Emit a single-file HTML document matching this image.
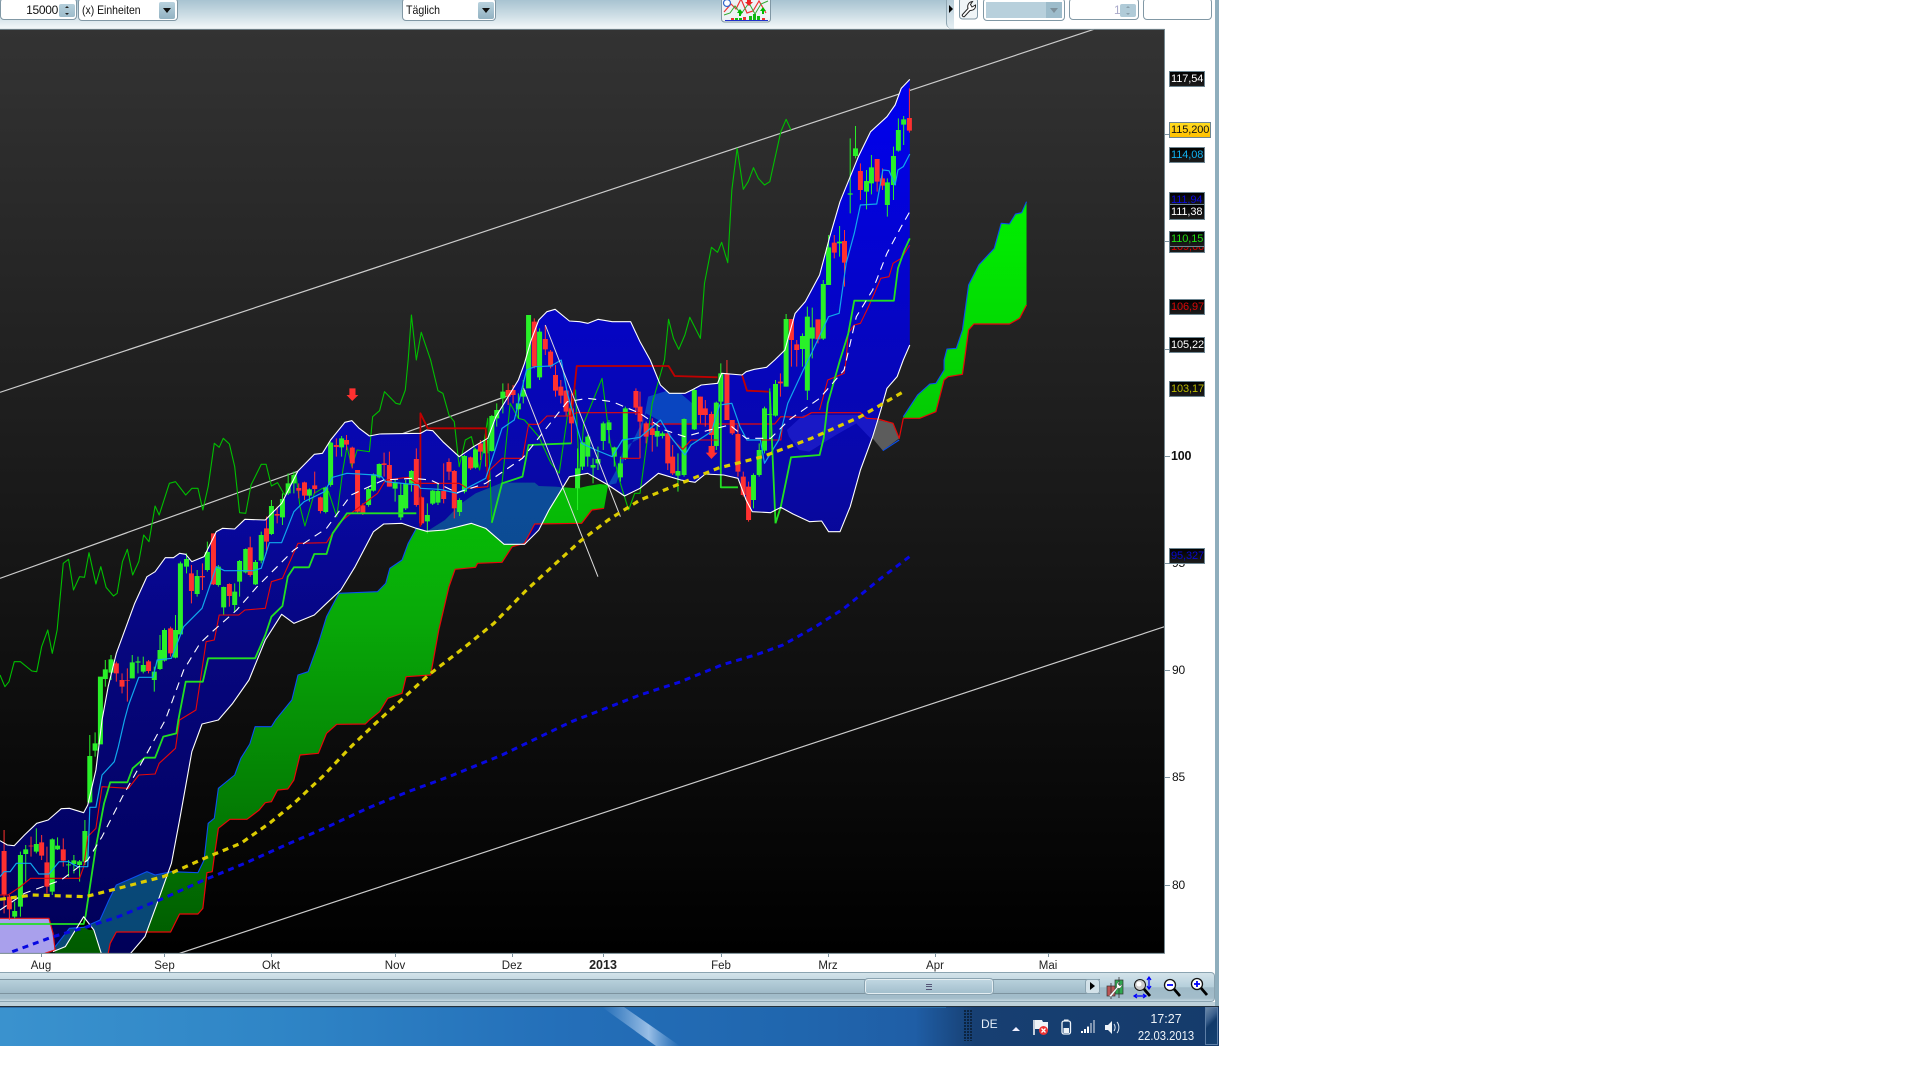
<!DOCTYPE html>
<html><head><meta charset="utf-8"><title>Chart</title>
<style>
html,body{margin:0;padding:0;background:#fff;width:1920px;height:1080px;overflow:hidden;font-family:"Liberation Sans",sans-serif}
.a{position:absolute}
svg{display:block}
.c path,.c polyline{vector-effect:non-scaling-stroke;fill:none;stroke-linejoin:round}
.box{position:absolute;background:#fff;border:1px solid #8198a5;border-radius:4px;box-sizing:border-box}
.t{position:absolute;font-size:12px;line-height:14px;color:#111;white-space:nowrap}
.dd{position:absolute;background:linear-gradient(#b9d2de,#92b2c2);border-radius:2px}
.dd:after{content:"";position:absolute;left:4px;top:6px;border-left:4px solid transparent;border-right:4px solid transparent;border-top:5px solid #111}
.l{position:absolute;left:1169px;width:36px;height:16px;box-sizing:border-box;border:1px solid #6e8692;background:linear-gradient(#000,#1c1c1c);font-size:11px;line-height:15px;letter-spacing:-.1px;padding-left:1px;white-space:nowrap;overflow:hidden}
.y{position:absolute;left:1172px;font-size:12px;line-height:14px;color:#111;letter-spacing:-.2px}
.k{position:absolute;left:1165px;width:5px;height:1px;background:#7d939f}
.x{position:absolute;top:959px;font-size:11.5px;line-height:14px;color:#222;transform:translateX(-50%)}
.tk{position:absolute;top:953px;width:1px;height:4px;background:#7d939f}
</style></head><body>

<!-- top toolbar -->
<div class="a" style="left:0;top:0;width:947px;height:29px;background:linear-gradient(#a8c3d1,#cfdfe6 55%,#f5f9fa)"></div>
<div class="a" style="left:946px;top:0;width:8px;height:29px;background:linear-gradient(#b6ccd8,#e6eff3);border-left:1px solid #8fa6b2;border-bottom-left-radius:6px;box-sizing:border-box"></div>
<div class="a" style="left:949px;top:5px;border-top:4px solid transparent;border-bottom:4px solid transparent;border-left:4px solid #000"></div>

<div class="box" style="left:0;top:-2px;width:77px;height:22px"></div>
<div class="t" style="right:1862px;top:3px;letter-spacing:-.3px">15000</div>
<div class="a" style="left:59px;top:4px;width:16px;height:13px;background:linear-gradient(#b5cfdb,#9dbccb);border-radius:2px"></div>
<div class="a" style="left:65px;top:6px;border-left:2px solid transparent;border-right:2px solid transparent;border-bottom:2px solid #222"></div>
<div class="a" style="left:65px;top:13px;border-left:2px solid transparent;border-right:2px solid transparent;border-top:2px solid #222"></div>

<div class="box" style="left:78px;top:-2px;width:100px;height:23px"></div>
<div class="t" style="left:82px;top:3px;transform:scaleX(.87);transform-origin:left">(x) Einheiten</div>
<div class="dd" style="left:159px;top:2px;width:16px;height:17px"></div>

<div class="box" style="left:402px;top:-2px;width:94px;height:23px"></div>
<div class="t" style="left:406px;top:3px;transform:scaleX(.88);transform-origin:left">Täglich</div>
<div class="dd" style="left:478px;top:2px;width:16px;height:17px"></div>

<svg class="a" style="left:721px;top:0" width="50" height="23" viewBox="0 0 50 23">
<rect x=".5" y="-3" width="49" height="25" rx="3" fill="#eef3f5" stroke="#8198a5"/>
<polyline points="3,12 10,4 15,9 20,-1 26,13 32,11 38,1 45,13" fill="none" stroke="#e33" stroke-width="1.2"/>
<polyline points="3,15 9,13 14,6 20,14 28,3 34,14 40,4 47,1" fill="none" stroke="#3a3" stroke-width="1"/>
<circle cx="6" cy="3" r="3.5" fill="#fff" stroke="#36c" stroke-width="1.2"/>
<path d="M16 13l3-4 3 4h-2v3h-2v-3zM39 11l3-4 3 4h-2v3h-2v-3z" fill="#0b0"/>
<path d="M26 -1h4v3h2l-4 4-4-4h2z" fill="#e22"/>
<path d="M14 18h3v2h-3zM18 18h3v2h-3zM28 16h3v4h-3zM32 14h3v6h-3zM36 16h3v4h-3z" fill="#1b1"/>
<path d="M10 18h3v2h-3zM22 17h3v3h-3zM41 18h3v2h-3z" fill="#e33"/>
<path d="M4 20.5h43" stroke="#23c" stroke-width="1"/>
</svg>

<svg class="a" style="left:959px;top:0" width="20" height="20" viewBox="0 0 20 20">
<rect x=".5" y="-2" width="18" height="21" rx="3" fill="#f0f5f7" stroke="#8198a5"/>
<path d="M3.500 14.500L9 8.500C8 5.500 9.500 2 13.500 1.500L11.500 4.500 13 7 16.500 5C17 8.500 14.500 10.500 11 10.500L5.500 16.500C4.500 17.500 2.500 15.500 3.500 14.500Z" fill="#fff" stroke="#222" stroke-width="1"/>
</svg>

<div class="box" style="left:983px;top:-2px;width:82px;height:23px"></div>
<div class="a" style="left:986px;top:2px;width:60px;height:16px;background:#b8d0dc"></div>
<div class="a" style="left:1046px;top:2px;width:16px;height:16px;background:#9dbccb"></div>
<div class="a" style="left:1050px;top:8px;border-left:4px solid transparent;border-right:4px solid transparent;border-top:5px solid #7d909b"></div>
<div class="box" style="left:1069px;top:-2px;width:70px;height:22px"></div>
<div class="t" style="left:1114px;top:3px;color:#a9a9c9">1</div>
<div class="a" style="left:1120px;top:4px;width:16px;height:13px;background:#b0cbd8;border-radius:2px"></div>
<div class="a" style="left:1126px;top:6px;border-left:2px solid transparent;border-right:2px solid transparent;border-bottom:2px solid #8aa0ac"></div>
<div class="a" style="left:1126px;top:13px;border-left:2px solid transparent;border-right:2px solid transparent;border-top:2px solid #8aa0ac"></div>
<div class="box" style="left:1143px;top:-2px;width:69px;height:22px"></div>

<!-- chart svg -->
<svg class="a c" style="left:0;top:0" width="1920" height="1080" viewBox="0 0 4704 3240" preserveAspectRatio="none">
<defs>
<linearGradient id="bg" gradientUnits="userSpaceOnUse" x1="0" y1="88" x2="0" y2="2860"><stop offset="0" stop-color="#333"/><stop offset="1" stop-color="#000"/></linearGradient>
<linearGradient id="bl" gradientUnits="userSpaceOnUse" x1="0" y1="240" x2="0" y2="2860"><stop offset="0" stop-color="#0000f0"/><stop offset=".45" stop-color="#0808a8"/><stop offset=".65" stop-color="#06067e"/><stop offset="1" stop-color="#000058"/></linearGradient>
<linearGradient id="gr" gradientUnits="userSpaceOnUse" x1="0" y1="600" x2="0" y2="2860"><stop offset="0" stop-color="#00f000"/><stop offset=".55" stop-color="#08aa08"/><stop offset="1" stop-color="#005a00"/></linearGradient>
<clipPath id="ch"><rect x="0" y="89" width="2853" height="2770"/></clipPath>
<clipPath id="bd"><path d="M0,2522 18,2535 35,2537 60,2505 90,2470 118,2460 150,2426 170,2425 205,2438 215,2415 235,2310 250,2160 265,2060 285,1960 300,1910 330,1810 360,1730 380,1715 405,1673 425,1673 440,1660 455,1663 470,1685 500,1670 530,1595 545,1585 575,1587 600,1558 650,1560 690,1510 730,1413 770,1363 790,1360 810,1320 845,1267 862,1262 880,1285 905,1308 930,1302 1030,1300 1045,1290 1060,1292 1085,1325 1125,1370 1160,1340 1195,1315 1215,1250 1270,1140 1285,1090 1300,1025 1320,960 1340,935 1360,928 1395,963 1420,965 1440,970 1465,958 1500,965 1545,965 1568,1025 1593,1080 1618,1155 1640,1180 1678,1180 1698,1168 1718,1155 1758,1150 1768,1120 1818,1125 1828,1115 1848,1108 1878,1102 1898,1080 1923,1050 1948,940 1973,905 2008,825 2033,710 2058,605 2083,530 2103,470 2133,395 2173,350 2193,315 2208,265 2229,238 2229,1035 2213,1080 2198,1130 2173,1165 2158,1230 2138,1310 2108,1410 2083,1520 2058,1595 2030,1595 2013,1563 1983,1565 1943,1542 1913,1522 1888,1538 1843,1535 1828,1500 1808,1435 1773,1425 1728,1422 1703,1447 1668,1440 1613,1420 1568,1465 1530,1488 1490,1455 1440,1420 1395,1430 1345,1530 1320,1590 1285,1633 1235,1633 1190,1585 1155,1570 1090,1590 1045,1594 1020,1585 985,1570 940,1572 915,1595 870,1700 835,1770 800,1810 770,1845 720,1870 690,1843 650,1920 610,2040 570,2110 535,2160 495,2172 470,2255 440,2460 420,2590 385,2710 355,2810 320,2860 248,2860 230,2790 205,2750 160,2840 130,2855 0,2860Z"/></clipPath>
</defs>
<rect x="0" y="88" width="2853" height="2772" fill="url(#bg)"/>
<g clip-path="url(#ch)">
<path d="M0,1177 2680,88" stroke="#ccc" stroke-width="1.2"/>
<path d="M0,1735 1465,1090" stroke="#ccc" stroke-width="1.2"/>
<path d="M440,2860 2853,1880" stroke="#ccc" stroke-width="1.2"/>

<!-- cloud -->
<path id="cl" style="fill:url(#gr)" d="M135,2840 170,2785 205,2782 245,2760 265,2705 285,2655 360,2615 380,2625 420,2615 485,2618 500,2580 510,2470 525,2455 535,2365 575,2325 590,2275 612,2232 625,2180 665,2180 675,2160 715,2100 730,2025 755,2015 780,1930 800,1850 830,1780 925,1775 945,1750 955,1705 985,1680 1000,1630 1020,1585 1045,1595 1090,1560 1130,1510 1165,1480 1230,1448 1310,1448 1320,1458 1360,1460 1415,1465 1440,1458 1470,1452 1490,1455 1480,1525 1450,1530 1425,1570 1310,1572 1285,1630 1255,1640 1230,1687 1170,1690 1165,1702 1115,1708 1100,1760 1075,1890 1055,2025 995,2030 985,2080 950,2095 930,2135 905,2160 895,2172 825,2173 800,2200 780,2260 735,2265 720,2340 705,2367 680,2370 665,2405 650,2408 635,2430 605,2458 563,2458 535,2485 525,2570 520,2615 507,2618 497,2725 485,2742 440,2742 418,2796 285,2796 270,2830 265,2860 135,2860Z"/>
<path style="fill:url(#gr)" d="M2213,1250 2248,1185 2278,1152 2293,1150 2313,1110 2313,1080 2320,1047 2343,1045 2358,990 2373,855 2398,795 2436,745 2453,670 2473,672 2488,642 2503,638 2515,605 2515,915 2498,955 2473,972 2386,972 2373,990 2363,1080 2358,1123 2323,1130 2313,1140 2293,1235 2253,1255 2213,1255Z"/>
<path d="M2151,1260 2188,1270 2203,1315 2163,1352 2138,1315Z" style="fill:#5c5c5c"/>

<!-- band fill -->
<path style="fill:url(#bl)" d="M0,2522 18,2535 35,2537 60,2505 90,2470 118,2460 150,2426 170,2425 205,2438 215,2415 235,2310 250,2160 265,2060 285,1960 300,1910 330,1810 360,1730 380,1715 405,1673 425,1673 440,1660 455,1663 470,1685 500,1670 530,1595 545,1585 575,1587 600,1558 650,1560 690,1510 730,1413 770,1363 790,1360 810,1320 845,1267 862,1262 880,1285 905,1308 930,1302 1030,1300 1045,1290 1060,1292 1085,1325 1125,1370 1160,1340 1195,1315 1215,1250 1270,1140 1285,1090 1300,1025 1320,960 1340,935 1360,928 1395,963 1420,965 1440,970 1465,958 1500,965 1545,965 1568,1025 1593,1080 1618,1155 1640,1180 1678,1180 1698,1168 1718,1155 1758,1150 1768,1120 1818,1125 1828,1115 1848,1108 1878,1102 1898,1080 1923,1050 1948,940 1973,905 2008,825 2033,710 2058,605 2083,530 2103,470 2133,395 2173,350 2193,315 2208,265 2229,238 2229,1035 2213,1080 2198,1130 2173,1165 2158,1230 2138,1310 2108,1410 2083,1520 2058,1595 2030,1595 2013,1563 1983,1565 1943,1542 1913,1522 1888,1538 1843,1535 1828,1500 1808,1435 1773,1425 1728,1422 1703,1447 1668,1440 1613,1420 1568,1465 1530,1488 1490,1455 1440,1420 1395,1430 1345,1530 1320,1590 1285,1633 1235,1633 1190,1585 1155,1570 1090,1590 1045,1594 1020,1585 985,1570 940,1572 915,1595 870,1700 835,1770 800,1810 770,1845 720,1870 690,1843 650,1920 610,2040 570,2110 535,2160 495,2172 470,2255 440,2460 420,2590 385,2710 355,2810 320,2860 248,2860 230,2790 205,2750 160,2840 130,2855 0,2860Z"/>

<!-- overlap -->
<g clip-path="url(#bd)">
<path style="fill:#0f8f90;opacity:.5" d="M135,2840 170,2785 205,2782 245,2760 265,2705 285,2655 360,2615 380,2625 420,2615 485,2618 500,2580 510,2470 525,2455 1020,1585 1045,1595 1090,1560 1130,1510 1165,1480 1230,1448 1310,1448 1320,1458 1360,1460 1415,1465 1440,1458 1470,1452 1490,1455 1480,1525 1450,1530 1425,1570 1310,1572 1285,1630 1255,1640 1230,1687 1170,1690 1100,1760 1075,1890 520,2615 507,2618 497,2725 485,2742 440,2742 418,2796 285,2796 270,2830 265,2860 135,2860Z"/>
<path style="fill:#0c70c8;opacity:.6" d="M1490,1455 1510,1410 1530,1340 1568,1315 1588,1190 1653,1165 1696,1210 1698,1270 1628,1270 1583,1240 1530,1375 1510,1450Z"/>
<path style="fill:#3030e0;opacity:.45" d="M1928,1290 1968,1245 2048,1245 2108,1245 2148,1260 2133,1315 2098,1270 2048,1305 1983,1355 1958,1350 1933,1310Z"/>
</g>

<!-- lavender -->
<path style="fill:#a9a0ec" d="M0,2755 120,2755 130,2800 135,2850 110,2860 0,2860Z"/>
<path d="M0,2755 120,2755 130,2800 135,2850 110,2860" stroke="#e01010" stroke-width="1.2"/>
<path d="M205,2750 215,2765 230,2790 218,2790 210,2785Z" style="fill:#000"/>

<!-- cloud edges -->
<path stroke="#0a50f0" stroke-width="1.1" d="M135,2840 170,2785 205,2782 245,2760 265,2705 285,2655 360,2615 380,2625 420,2615 485,2618 500,2580 510,2470 525,2455 535,2365 575,2325 590,2275 612,2232 625,2180 665,2180 675,2160 715,2100 730,2025 755,2015 780,1930 800,1850 830,1780 925,1775 945,1750 955,1705 985,1680 1000,1630 1020,1585 M2163,1352 2203,1320 M2213,1250 2248,1185 2278,1152 2293,1150 2313,1110 2313,1080 2320,1047 2343,1045 2358,990 2373,855 2398,795 2436,745 2453,670 2473,672 2488,642 2503,638 2515,605"/>
<path stroke="#e80808" stroke-width="1.2" d="M2515,915 2498,955 2473,972 2386,972 2373,990 2363,1080 2358,1123 2323,1130 2313,1140 2293,1235 2253,1255 2213,1255 2203,1315 2188,1270 2151,1257 2123,1255 2108,1238 1988,1238 1968,1252 1913,1250 1898,1272 1583,1272 M1480,1525 1450,1530 1425,1570 1310,1572 1285,1630 1255,1640 1230,1687 1170,1690 1165,1702 1115,1708 1100,1760 1075,1890 1055,2025 995,2030 985,2080 950,2095 930,2135 905,2160 895,2172 825,2173 800,2200 780,2260 735,2265 720,2340 705,2367 680,2370 665,2405 650,2408 635,2430 605,2458 563,2458 535,2485 525,2570 520,2615 507,2618 497,2725 485,2742 440,2742 418,2796 285,2796 270,2830 265,2860"/>

<!-- chikou -->
<path stroke="#00c000" stroke-width="1.1" d="M0,2025 12,2060 22,2045 35,1985 50,1985 78,2013 90,2015 102,1940 117,1890 128,1960 140,1890 155,1690 168,1678 180,1770 195,1730 207,1732 218,1658 235,1752 247,1700 260,1762 278,1788 287,1780 300,1685 312,1648 325,1725 340,1685 352,1605 365,1625 380,1518 390,1545 415,1450 430,1445 455,1485 470,1465 485,1465 497,1530 510,1460 525,1330 537,1342 547,1315 562,1332 575,1400 587,1538 602,1540 615,1455 640,1393 652,1393 665,1458 680,1448 697,1485 725,1420 735,1520 747,1578 770,1480 790,1465 805,1475 825,1550 840,1410 850,1340 862,1400 875,1350 905,1355 913,1250 930,1232 942,1175 970,1210 980,1213 993,1170 1000,1080 1008,945 1020,1080 1032,997 1055,1080 1073,1172 1085,1180 1100,1245 1113,1265 1125,1400 1140,1320 1155,1310 1175,1410 1195,1255 1205,1568 1230,1450 1250,1210 1270,1255 1285,1260 1320,1310 1350,1390 1370,1420 1390,1250 1410,1170 1420,1440 1430,1270 1475,1135 1495,1330 1520,1450 1540,1530 1555,1480 1568,1480 1598,1210 1628,1080 1638,958 1650,1015 1663,1048 1678,1005 1690,952 1716,1015 1726,850 1743,742 1758,757 1768,727 1783,788 1793,570 1806,445 1821,568 1833,545 1846,503 1858,535 1873,555 1886,545 1913,395 1926,358 1938,390"/>

<!-- candles -->
<path stroke="#29f029" stroke-width="1" d="M36 2705V2755M50 2555V2750M63 2535V2645M89 2485V2560M128 2515V2685M141 2512V2550M168 2580V2630M181 2565V2620M195 2580V2645M208 2460V2595M220 2205V2410M233 2197V2270M258 1980V2060M272 1965V2040M324 1965V2035M338 1970V2020M351 1970V2020M378 2000V2075M392 1905V2010M403 1885V1985M430 1845V1975M442 1685V1905M457 1660V1720M483 1710V1790M508 1625V1715M535 1695V1760M548 1760V1845M575 1750V1835M587 1680V1790M602 1645V1720M626 1680V1755M640 1595V1690M665 1500V1605M692 1480V1575M706 1420V1485M720 1415V1480M758 1465V1505M798 1460V1540M810 1325V1460M837 1308V1370M903 1460V1520M915 1420V1475M929 1390V1435M968 1440V1505M982 1450V1560M994 1440V1530M1008 1410V1475M1047 1510V1600M1060 1470V1515M1073 1450V1515M1126 1495V1548M1138 1365V1480M1165 1345V1406M1190 1310V1400M1205 1245V1355M1217 1210V1280M1232 1150V1240M1270 1180V1255M1282 1140V1210M1322 985V1140M1415 1345V1530M1427 1325V1410M1440 1305V1400M1453 1375V1450M1465 1340V1410M1478 1265V1350M1492 1260V1330M1505 1340V1400M1520 1370V1445M1532 1220V1380M1610 1270V1340M1623 1295V1315M1661 1360V1475M1676 1255V1430M1701 1165V1290M1755 1205V1350M1766 1090V1210M1846 1420V1525M1860 1330V1430M1873 1220V1360M1886 1165V1320M1900 1140V1250M1926 942V1160M1966 1000V1100M1978 920V1200M1990 923V1075M2017 840V1020M2030 705V855M2057 678V770M2083 415V640M2096 378V475M2123 510V628M2135 465V583M2174 535V650M2189 440V600M2201 355V455M2214 348V435"/>
<path stroke="#29f029" stroke-width="5" d="M36 2733V2750M50 2565V2720M63 2548V2562M89 2532V2555M128 2518V2675M141 2537V2548M168 2593V2596M181 2581V2592M195 2584V2595M208 2493V2585M220 2268V2407M233 2230V2252M246 2030V2233M258 2008V2037M272 1978V2018M324 1987V2035M338 1984V1988M351 1995V2015M378 2015V2040M392 1950V2007M403 1890V1982M430 1890V1973M442 1690V1903M457 1677V1700M483 1728V1782M508 1656V1710M535 1700V1755M548 1761V1822M575 1775V1815M587 1683V1745M602 1647V1717M626 1686V1753M640 1605V1682M665 1518V1602M692 1497V1552M706 1450V1480M720 1425V1450M758 1468V1487M798 1462V1536M810 1328V1455M837 1315V1342M903 1467V1515M915 1423V1472M929 1392V1432M968 1447V1466M982 1485V1552M994 1452V1525M1008 1413V1450M1047 1545V1564M1060 1472V1511M1073 1473V1508M1126 1500V1536M1138 1368V1475M1165 1348V1403M1190 1320V1360M1205 1248V1353M1217 1230V1255M1232 1175V1195M1270 1210V1228M1282 1170V1190M1295 945V1165M1322 995V1132M1415 1405V1465M1427 1327V1400M1440 1310V1370M1453 1395V1403M1465 1377V1390M1478 1270V1323M1492 1267V1290M1505 1342V1370M1520 1390V1432M1532 1225V1375M1610 1293V1310M1623 1300V1308M1661 1413V1427M1676 1257V1425M1701 1170V1288M1755 1208V1338M1766 1120V1205M1846 1425V1500M1860 1350V1425M1873 1225V1352M1886 1242V1245M1900 1152V1247M1926 957V1160M1966 1008V1047M1978 950V1172M1990 982V1016M2017 852V1016M2030 742V855M2057 725V730M2083 580V584M2096 445V468M2123 543V575M2135 502V550M2174 547V615M2189 468V555M2201 390V452M2214 358V374"/>
<path stroke="#ff3030" stroke-width="1" d="M10 2490V2740M23 2685V2760M76 2510V2570M102 2505V2580M115 2540V2680M155 2515V2600M285 1985V2045M299 2020V2080M312 2005V2105M364 1980V2020M418 1880V1970M469 1695V1810M496 1690V1770M523 1600V1755M562 1750V1820M613 1610V1730M653 1550V1660M679 1520V1570M732 1450V1495M746 1445V1500M771 1415V1480M785 1490V1540M824 1315V1370M849 1305V1350M863 1340V1405M876 1410V1540M889 1510V1545M941 1358V1430M954 1355V1460M1020 1345V1520M1033 1490V1575M1087 1390V1510M1100 1375V1440M1113 1410V1555M1153 1370V1410M1177 1320V1380M1245 1150V1215M1257 1155V1210M1309 955V1105M1336 975V1065M1349 1050V1105M1361 1095V1190M1374 1140V1210M1387 1170V1250M1400 1180V1330M1558 1165V1245M1568 1175V1375M1583 1265V1330M1598 1255V1355M1636 1295V1410M1648 1335V1425M1716 1190V1270M1728 1200V1280M1743 1235V1338M1781 1080V1260M1794 1260V1305M1808 1275V1430M1821 1415V1490M1834 1445V1565M1912 1120V1190M1939 957V1100M1952 1020V1100M2004 958V1030M2044 705V775M2069 690V860M2108 490V600M2149 477V575M2162 505V570M2228 265V398"/>
<path stroke="#ff3030" stroke-width="5" d="M10 2553V2683M23 2690V2728M76 2537V2539M102 2527V2567M115 2587V2660M155 2548V2582M285 1990V2020M299 2040V2060M312 2040V2042M364 1984V2013M418 1885V1960M469 1720V1773M496 1728V1732M523 1600V1753M562 1752V1788M613 1642V1725M653 1585V1625M679 1542V1547M732 1464V1472M746 1447V1487M771 1456V1467M785 1492V1533M824 1335V1341M849 1320V1334M863 1343V1390M876 1410V1535M889 1516V1538M941 1390V1395M954 1395V1460M1020 1377V1515M1033 1492V1570M1087 1473V1497M1100 1386V1415M1113 1413V1525M1153 1372V1405M1177 1330V1355M1245 1170V1190M1257 1170V1185M1309 965V1100M1336 1017V1048M1349 1055V1100M1361 1125V1172M1374 1160V1187M1387 1172V1235M1400 1225V1270M1558 1173V1223M1568 1220V1265M1583 1270V1310M1598 1285V1305M1636 1300V1390M1648 1370V1420M1716 1190V1245M1728 1225V1245M1743 1242V1305M1781 1120V1260M1794 1260V1300M1808 1302V1415M1821 1430V1485M1834 1460V1560M1912 1145V1150M1939 957V1020M1952 1033V1050M2004 958V1018M2044 728V758M2069 723V788M2108 513V570M2149 477V545M2162 535V557M2228 354V392"/>

<!-- thin red -->
<path stroke="#e80808" stroke-width="1.1" d="M0,2685 20,2685 50,2660 75,2635 195,2635 205,2600 215,2510 235,2485 250,2360 315,2365 340,2325 380,2322 390,2290 430,2245 440,2160 480,2130 505,1925 525,1920 537,1845 585,1845 600,1830 650,1825 665,1745 692,1735 730,1630 800,1628 830,1570 860,1540 925,1480 945,1440 1000,1432 1020,1450 1125,1450 1145,1465 1195,1460 1200,1410 1230,1375 1280,1375 1295,1273 1320,1273 1340,1248 1400,1248 1412,1238 1568,1238"/>
<path stroke="#e80808" stroke-width="1.1" d="M1520,1375 1568,1375 M1648,1320 1673,1348 1693,1320 1758,1320 M1828,1320 1913,1320 1918,1270 M2008,1230 2028,1140 2068,1120 2073,1080 2078,1000 2093,975 2108,970 2128,920 2158,835 2178,830 2188,790 2208,775 2229,735"/>
<!-- dark red -->
<path stroke="#c00000" stroke-width="1.8" d="M1030,1580 1030,1240 1048,1285 1190,1285 1195,1440 M1400,1250 1413,1098 1638,1098 1653,1128 1758,1132 M1818,1125 1830,1172 1883,1175"/>

<!-- cyan -->
<path stroke="#10a8ec" stroke-width="1.2" d="M0,2630 10,2615 25,2615 40,2590 75,2590 95,2622 120,2622 145,2585 168,2585 190,2600 215,2600 220,2422 235,2422 250,2325 280,2285 290,2240 305,2160 315,2115 340,2032 375,2032 385,1980 420,1975 450,1880 495,1825 530,1700 550,1712 620,1712 640,1705 660,1628 690,1628 720,1535 745,1505 795,1475 815,1432 850,1420 920,1425 935,1430 945,1445 1025,1455 1030,1465 1075,1468 1085,1470 1120,1480 1190,1435 1205,1380 1230,1285 1260,1260 1290,1110 1310,1100 1350,1098 1375,1080 1390,1180 1425,1330 1460,1350 1500,1370 1525,1320 1568,1312 1598,1280 1618,1260 1643,1310 1678,1365 1693,1335 1743,1295 1763,1215 1793,1210 1813,1280 1830,1320 1863,1320 1873,1390 1908,1320 1930,1210 1968,1110 1988,1060 2030,950 2056,940 2073,790 2093,700 2108,615 2148,612 2163,510 2178,512 2193,555 2200,510 2213,500 2229,462"/>

<!-- thick green -->
<path stroke="#22e022" stroke-width="1.8" d="M0,2772 205,2772 210,2745 235,2540 255,2410 270,2347 312,2347 325,2305 355,2273 380,2273 400,2210 432,2200 437,2160 455,2045 497,2045 510,1975 625,1975 650,1905 665,1850 692,1818 705,1730 720,1702 757,1702 770,1662 800,1662 815,1600 850,1540 1020,1540"/>
<path stroke="#22e022" stroke-width="1.8" d="M1205,1568 1230,1450 1280,1430 1295,1335 1400,1330 M1766,1120 1766,1462 1808,1462 M1886,1175 1900,1570 M1900,1570 1913,1520 1938,1372 2008,1365 2018,1315 2028,1210 2058,1080 2078,1002 2093,902 2190,902 2200,805 2216,750 2229,715"/>

<!-- zig white -->
<path stroke="#ddd" stroke-width="1" d="M1336,975 1520,1550 M1283,1165 1465,1730"/>

<!-- white dashed -->
<path stroke="#fff" stroke-width="1.1" stroke-dasharray="8 6" d="M0,2730 60,2680 150,2640 215,2580 250,2510 300,2390 360,2260 405,2160 450,2010 490,1930 520,1895 580,1830 630,1760 720,1650 800,1585 860,1485 940,1440 1010,1435 1055,1440 1120,1478 1190,1450 1280,1375 1390,1205 1440,1195 1500,1205 1568,1240 1628,1290 1678,1310 1738,1290 1788,1275 1828,1315 1888,1315 1933,1260 2008,1195 2068,1110 2098,950 2138,870 2173,760 2208,680 2229,635"/>

<!-- band edges -->
<path stroke="#fff" stroke-width="1.1" d="M0,2522 18,2535 35,2537 60,2505 90,2470 118,2460 150,2426 170,2425 205,2438 215,2415 235,2310 250,2160 265,2060 285,1960 300,1910 330,1810 360,1730 380,1715 405,1673 425,1673 440,1660 455,1663 470,1685 500,1670 530,1595 545,1585 575,1587 600,1558 650,1560 690,1510 730,1413 770,1363 790,1360 810,1320 845,1267 862,1262 880,1285 905,1308 930,1302 1030,1300 1045,1290 1060,1292 1085,1325 1125,1370 1160,1340 1195,1315 1215,1250 1270,1140 1285,1090 1300,1025 1320,960 1340,935 1360,928 1395,963 1420,965 1440,970 1465,958 1500,965 1545,965 1568,1025 1593,1080 1618,1155 1640,1180 1678,1180 1698,1168 1718,1155 1758,1150 1768,1120 1818,1125 1828,1115 1848,1108 1878,1102 1898,1080 1923,1050 1948,940 1973,905 2008,825 2033,710 2058,605 2083,530 2103,470 2133,395 2173,350 2193,315 2208,265 2229,238 M2229,1035 2213,1080 2198,1130 2173,1165 2158,1230 2138,1310 2108,1410 2083,1520 2058,1595 2030,1595 2013,1563 1983,1565 1943,1542 1913,1522 1888,1538 1843,1535 1828,1500 1808,1435 1773,1425 1728,1422 1703,1447 1668,1440 1613,1420 1568,1465 1530,1488 1490,1455 1440,1420 1395,1430 1345,1530 1320,1590 1285,1633 1235,1633 1190,1585 1155,1570 1090,1590 1045,1594 1020,1585 985,1570 940,1572 915,1595 870,1700 835,1770 800,1810 770,1845 720,1870 690,1843 650,1920 610,2040 570,2110 535,2160 495,2172 470,2255 440,2460 420,2590 385,2710 355,2810 320,2860 M248,2860 230,2790 205,2750 160,2840 130,2855"/>

<!-- dashed MAs -->
<path stroke="#0808e0" stroke-width="3" stroke-dasharray="6 5" d="M30,2855 130,2810 210,2782 290,2750 400,2695 500,2640 600,2590 700,2535 800,2482 900,2425 1000,2375 1100,2330 1230,2265 1400,2165 1568,2085 1668,2045 1768,1995 1858,1962 1918,1935 1998,1880 2068,1825 2158,1735 2228,1670"/>
<path stroke="#dccc00" stroke-width="3.2" stroke-dasharray="6 5" d="M0,2698 80,2685 210,2690 290,2665 400,2630 510,2570 590,2530 660,2470 720,2410 790,2330 860,2240 920,2170 1050,2025 1140,1940 1210,1870 1290,1770 1420,1625 1490,1560 1568,1500 1658,1455 1758,1405 1868,1370 1988,1315 2108,1250 2218,1172"/>

<!-- arrows -->
<path d="M856,1165H871V1185H878L863,1203 849,1185H856Z" style="fill:#ff3030"/>
<path d="M1736,1338H1751V1358H1758L1743,1377 1729,1358H1736Z" style="fill:#ff3030"/>
</g>
<path d="M0,88H2853V2860H0" stroke="#74878f" stroke-width="1"/>
</svg>

<!-- right strip -->
<div class="a" style="left:1215px;top:0;width:4px;height:1007px;background:#8faebd"></div>

<!-- price labels -->
<div class="k" style="top:134px"></div><div class="k" style="top:241px"></div><div class="k" style="top:349px"></div><div class="k" style="top:456px"></div><div class="k" style="top:563px;width:30px"></div><div class="k" style="top:670px"></div><div class="k" style="top:777px"></div><div class="k" style="top:885px"></div>
<div class="y" style="top:449px;font-weight:bold;font-size:12.5px;left:1171px">100</div>
<div class="y" style="top:556px">95</div>
<div class="y" style="top:663px">90</div>
<div class="y" style="top:770px">85</div>
<div class="y" style="top:878px">80</div>
<div class="l" style="top:71px;color:#fff">117,54</div>
<div class="l" style="top:122px;width:42px;background:linear-gradient(#ffdc20,#ffc000);color:#111">115,200</div>
<div class="l" style="top:147px;color:#10b0f0">114,08</div>
<div class="l" style="top:192px;color:#0808e0">111,94</div>
<div class="l" style="top:204px;color:#fff">111,38</div>
<div class="l" style="top:237px;color:#d00;height:16px;line-height:18px">109,66</div>
<div class="l" style="top:231px;color:#20e010">110,15</div>
<div class="l" style="top:299px;color:#d80808">106,97</div>
<div class="l" style="top:337px;color:#fff">105,22</div>
<div class="l" style="top:381px;color:#b8b800">103,17</div>
<div class="l" style="top:548px;color:#0808d0;height:16px">95,327</div>

<!-- time axis -->
<div class="tk" style="left:41px"></div><div class="tk" style="left:164px"></div><div class="tk" style="left:271px"></div><div class="tk" style="left:395px"></div><div class="tk" style="left:512px"></div><div class="tk" style="left:603px"></div><div class="tk" style="left:721px"></div><div class="tk" style="left:828px"></div><div class="tk" style="left:935px"></div><div class="tk" style="left:1048px"></div>
<div class="x" style="left:41px">Aug</div><div class="x" style="left:164.5px">Sep</div><div class="x" style="left:271px">Okt</div><div class="x" style="left:395px">Nov</div><div class="x" style="left:512px">Dez</div><div class="x" style="left:603px;font-weight:bold;font-size:12.5px;top:958px">2013</div><div class="x" style="left:721px">Feb</div><div class="x" style="left:828px">Mrz</div><div class="x" style="left:935px">Apr</div><div class="x" style="left:1048px">Mai</div>

<!-- scroll panel -->
<div class="a" style="left:0;top:972px;width:1215px;height:30px;box-sizing:border-box;border:1px solid #8ba4b1;border-left:0;border-radius:0 4px 4px 0;background:linear-gradient(#d3e3ea,#b5cfdb 50%,#9fbac8 52%,#a3bdca 90%,#c6d9e2)"></div>
<div class="a" style="left:0;top:979px;width:1100px;height:15px;box-sizing:border-box;border-top:1px solid #7d939f;border-bottom:1px solid #7d939f;background:linear-gradient(#b7d0db,#9fbac8)"></div>
<div class="a" style="left:0;top:1002px;width:1215px;height:4px;background:#bed1da"></div>
<div class="a" style="left:865px;top:979px;width:128px;height:15px;box-sizing:border-box;border:1px solid #e4eef2;outline:1px solid #8ba4b1;border-radius:3px;background:linear-gradient(#bfd6e1,#a3bfcd)"></div>
<div class="a" style="left:926px;top:984px;width:6px;height:6px;border-top:1px solid #557;border-bottom:1px solid #557;box-sizing:border-box"></div>
<div class="a" style="left:926px;top:986px;width:6px;height:1px;background:#557"></div>
<div class="a" style="left:1085px;top:979px;width:15px;height:15px;box-sizing:border-box;border:1px solid #8ba4b1;border-radius:3px;background:#d3e2e9"></div>
<div class="a" style="left:1090px;top:982px;border-top:4px solid transparent;border-bottom:4px solid transparent;border-left:5px solid #000"></div>

<svg class="a" style="left:1105px;top:976px" width="106" height="24" viewBox="0 0 106 24">
<rect x="10" y="4" width="8" height="14" fill="#2fa84f" stroke="#333" stroke-width=".7"/><path d="M14 1v21" stroke="#333" stroke-width=".8"/>
<rect x="2" y="10" width="8" height="10" fill="#b55" stroke="#333" stroke-width=".7"/><path d="M6 7v16" stroke="#333" stroke-width=".8"/>
<path d="M4 20l8-9c-1-2 0-5 3-5l-2 2 2 2 2-2c0 3-2 5-4 4l-7 9z" fill="#fff" stroke="#555" stroke-width=".5"/>
<circle cx="35" cy="9" r="5.5" fill="#ccc" stroke="#111"/><circle cx="34" cy="8" r="2.5" fill="#fff"/>
<path d="M39 13l6 7" stroke="#000" stroke-width="2.8"/>
<path d="M44 2v10M42 4l2-3 2 3M42 10l2 3 2-3M30 20h10M32 18l-3 2 3 2M38 18l3 2-3 2" stroke="#00f" fill="none" stroke-width="1.2"/>
<circle cx="65" cy="9" r="5.5" fill="#fff" stroke="#111" stroke-width="1.3"/><path d="M62 9h6" stroke="#00f" stroke-width="1.8"/><path d="M69 13l6 7" stroke="#000" stroke-width="2.8"/>
<circle cx="92" cy="8" r="5.5" fill="#fff" stroke="#111" stroke-width="1.3"/><path d="M89 8h6M92 5v6" stroke="#00f" stroke-width="1.8"/><path d="M96 12l6 7" stroke="#000" stroke-width="2.8"/>
</svg>

<!-- taskbar -->
<div class="a" style="left:0;top:1006px;width:1219px;height:1px;background:#24313c"></div>
<div class="a" style="left:0;top:1007px;width:1219px;height:39px;background:linear-gradient(90deg,#3a92ce 0,#2f85c6 280px,#246fb9 560px,#2066ae 800px,#1f5ea6 915px,#173f72 975px,#153b6b 1219px);overflow:hidden">
<div class="a" style="left:0;top:0;width:946px;height:1px;background:#2a6ca8"></div>
<svg class="a" style="left:590px;top:0" width="100" height="39"><defs><linearGradient id="s" x1="0" y1="0" x2="1" y2="0"><stop offset="0" stop-color="#a9cbf0" stop-opacity="0"/><stop offset=".6" stop-color="#b6d3f2" stop-opacity=".8"/><stop offset="1" stop-color="#8db8e8" stop-opacity="0"/></linearGradient></defs><path d="M12,0 H34 L90,39 H66Z" fill="url(#s)"/></svg>
<svg class="a" style="left:964px;top:3px" width="9" height="31"><defs><pattern id="p" width="3" height="3" patternUnits="userSpaceOnUse"><rect width="2" height="2" fill="#0c2440"/></pattern></defs><rect width="9" height="31" fill="url(#p)"/></svg>
<div class="t" style="left:981px;top:10px;color:#e4eef8;font-size:12px">DE</div>
<div class="a" style="left:1012px;top:20px;border-left:4.5px solid transparent;border-right:4.5px solid transparent;border-bottom:4px solid #eef"></div>
<svg class="a" style="left:1032px;top:12px" width="90" height="17" viewBox="0 0 90 17">
<path d="M2 1v15" stroke="#fff" stroke-width="1.5"/><path d="M3 1h7l1 2h5v9H9l-1-2H3z" fill="#eef3f8"/><circle cx="11.5" cy="11.500" r="4.500" fill="#e33"/><path d="M9.500 9.500l4 4M13.500 9.500l-4 4" stroke="#fff" stroke-width="1.3"/>
<rect x="30" y="2" width="8.500" height="13" rx="2" fill="none" stroke="#eef3f8" stroke-width="1.3"/><rect x="32" y="0.500" width="4.500" height="2" fill="#eef3f8"/><rect x="31.500" y="9" width="5.500" height="5" fill="#eef3f8"/>
<path d="M49 14h2v-2h-2zM52 14h2v-4h-2z" fill="#fff"/><path d="M55 14h2V7h-2zM58 14h2V4h-2zM61 14h2V1h-2z" fill="#fff" opacity=".45"/><path d="M55 14h2V8h-2z" fill="#fff"/>
<path d="M73 6h3l4-4v13l-4-4h-3z" fill="#eef3f8"/><path d="M82 5c1.500 2 1.500 5 0 7M85 3c2.500 3 2.500 8 0 11" stroke="#dde7f2" stroke-width="1" fill="none"/>
</svg>
<div class="t" style="left:1166px;top:5px;color:#eef3f8;transform:translateX(-50%);font-size:12.5px">17:27</div>
<div class="t" style="left:1166px;top:22px;color:#eef3f8;transform:translateX(-50%) scaleX(.9);font-size:12.5px">22.03.2013</div>
<div class="a" style="left:1205px;top:0;width:13px;height:38px;box-sizing:border-box;border:1px solid #5d7ea6;background:linear-gradient(135deg,#6c89a8 0,#3a5f8c 30%,#123a6a 45%,#14406f 100%)"></div>
</div>

</body></html>
